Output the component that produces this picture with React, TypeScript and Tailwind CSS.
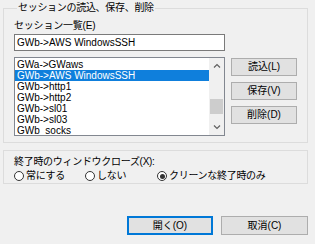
import { useState } from 'react';

const sessions = [
  'GWa->GWaws',
  'GWb->AWS WindowsSSH',
  'GWb->http1',
  'GWb->http2',
  'GWb->sl01',
  'GWb->sl03',
  'GWb_socks',
];

const font = "font-['Liberation_Sans','Noto_Sans_CJK_JP',sans-serif]";

const Button = ({
  label,
  primary,
  className,
}: {
  label: string;
  primary?: boolean;
  className?: string;
}) => (
  <button
    className={`flex items-center justify-center bg-[#e1e1e1] text-[10px] leading-none text-black ${
      primary ? 'border-2 border-[#0078d7]' : 'border border-[#adadad]'
    } ${className ?? ''}`}
  >
    {label}
  </button>
);

const Radio = ({ label, checked }: { label: string; checked?: boolean }) => (
  <label className="flex items-center gap-[2px]">
    <span className="flex h-[10px] w-[10px] items-center justify-center rounded-full border border-[#333333] bg-white">
      {checked && <span className="h-[5px] w-[5px] rounded-full bg-[#333333]" />}
    </span>
    <span>{label}</span>
  </label>
);

export default function App() {
  const [selected, setSelected] = useState(1);

  return (
    <div className={`h-[244px] w-[315px] bg-[#f0f0f0] pt-[1px] text-[10px] text-black ${font}`}>
      <fieldset className="ml-[3px] w-[305px] border border-[#dcdcdc] pb-[6px] pl-[10px]">
        <legend className="ml-[3px] h-[14px] px-[1px] leading-[14px] tracking-[-0.3px]">
          セッションの読込、保存、削除
        </legend>
        <div className="mt-[5px] h-[12px] leading-[12px] tracking-[-0.2px]">セッション一覧(E)</div>
        <div className="mt-[2px] flex h-[17px] w-[211px] items-center border border-[#7a7a7a] bg-white px-[2px]">
          GWb-&gt;AWS WindowsSSH
        </div>
        <div className="mt-[6px] flex gap-[6px]">
          <div className="flex h-[79px] w-[211px] border border-[#828790] bg-white">
            <ul className="flex-1 overflow-hidden pt-[1px]">
              {sessions.map((s, i) => (
                <li
                  key={s}
                  onClick={() => setSelected(i)}
                  className={`h-[11px] px-[2px] leading-[11px] ${
                    i === selected ? 'bg-[#0f7fdc] text-white' : ''
                  }`}
                >
                  {s}
                </li>
              ))}
            </ul>
            <div className="flex w-[15px] flex-col bg-[#f0f0f0]">
              <div className="flex h-[15px] items-center justify-center">
                <svg width="8" height="5" viewBox="0 0 8 5">
                  <path d="M1 4.5 L4 1.5 L7 4.5" fill="none" stroke="#606060" strokeWidth="1.2" />
                </svg>
              </div>
              <div className="flex-1 px-[1px] pt-[26px]">
                <div className="h-[15px] bg-[#cdcdcd]" />
              </div>
              <div className="flex h-[15px] items-center justify-center">
                <svg width="8" height="5" viewBox="0 0 8 5">
                  <path d="M1 0.5 L4 3.5 L7 0.5" fill="none" stroke="#606060" strokeWidth="1.2" />
                </svg>
              </div>
            </div>
          </div>
          <div className="mt-[1px] flex flex-col gap-[6px]">
            <Button label="読込(L)" className="h-[18px] w-[66px]" />
            <Button label="保存(V)" className="h-[18px] w-[66px]" />
            <Button label="削除(D)" className="h-[18px] w-[66px]" />
          </div>
        </div>
      </fieldset>

      <div className="ml-[3px] mt-[7px] w-[305px] border border-[#dcdcdc] pb-[1px] pl-[10px] pt-[5px]">
        <div className="h-[12px] leading-[12px] tracking-[-0.3px]">終了時のウィンドウクローズ(X):</div>
        <div className="mt-[2px] flex h-[12px] items-center leading-[12px] tracking-[-0.3px]">
          <div className="w-[71px]">
            <Radio label="常にする" />
          </div>
          <div className="w-[72px]">
            <Radio label="しない" />
          </div>
          <Radio label="クリーンな終了時のみ" checked />
        </div>
      </div>

      <div className="mt-[32px] flex justify-end gap-[8px] pr-[7px]">
        <Button label="開く(O)" primary className="h-[19px] w-[86px]" />
        <Button label="取消(C)" className="h-[19px] w-[87px]" />
      </div>
    </div>
  );
}
